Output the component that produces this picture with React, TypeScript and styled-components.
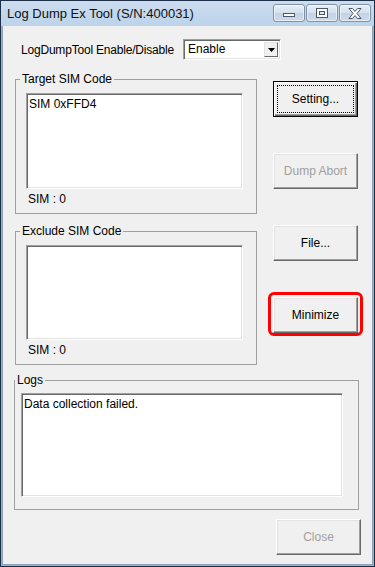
import React from 'react';
import styled, { createGlobalStyle, css } from 'styled-components';

const GlobalStyle = createGlobalStyle`
  html, body {
    margin: 0;
    padding: 0;
    background: #f0f0f0;
  }
  body {
    font-family: "Liberation Sans", Arial, sans-serif;
    font-size: 12px;
    color: #000;
  }
  * {
    box-sizing: border-box;
  }
`;

const Window = styled.div`
  width: 375px;
  height: 567px;
  display: flex;
  flex-direction: column;
  border: 1px solid #1b2f47;
  background: #7cbbe6;
  padding: 0 1px 1px 1px;
`;

const TitleBar = styled.div`
  height: 25px;
  flex: none;
  margin: 0 -1px;
  display: flex;
  align-items: flex-start;
  justify-content: space-between;
  padding: 0 3px 0 6px;
  background: linear-gradient(#cddcee, #bcd3ea);
`;

const Title = styled.span`
  font-size: 13px;
  line-height: 25px;
  color: #111;
`;

const CaptionButtons = styled.div`
  display: flex;
  gap: 1px;
  margin-top: 3px;
`;

const CapBtn = styled.div`
  width: 32px;
  height: 18px;
  border: 1px solid #7f92a9;
  border-radius: 3px;
  background: linear-gradient(#e8eff8, #d3e0ee 50%, #c3d3e6 51%, #ccdaeb);
  box-shadow: inset 0 0 0 1px rgba(255, 255, 255, 0.55);
  display: flex;
  align-items: center;
  justify-content: center;
`;

const Client = styled.div`
  flex: 1;
  background: #f0f0f0;
  border: 1px solid #8ea3ba;
  border-top: none;
  padding: 13px 11px 0 12px;
  display: flex;
  flex-direction: column;
`;

const EnableRow = styled.div`
  display: flex;
  align-items: center;
  height: 21px;
`;

const RowLabel = styled.span`
  flex: none;
  width: 168px;
  padding-left: 6px;
  white-space: nowrap;
  letter-spacing: -0.2px;
`;

const Combo = styled.div`
  width: 98px;
  height: 21px;
  display: flex;
  background: #fff;
  border: 1px solid;
  border-color: #a0a0a0 #fff #fff #a0a0a0;
  box-shadow: inset 1px 1px #696969, inset -1px -1px #e3e3e3;
  padding: 2px;
`;

const ComboText = styled.span`
  flex: 1;
  padding-left: 2px;
  line-height: 15px;
`;

const ComboArrow = styled.span`
  width: 14px;
  background: #f0f0f0;
  border: 1px solid;
  border-color: #e3e3e3 #696969 #696969 #e3e3e3;
  display: flex;
  align-items: center;
  justify-content: center;
`;

const Middle = styled.div`
  display: flex;
  margin-top: 12px;
`;

const Groups = styled.div`
  width: 242px;
  display: flex;
  flex-direction: column;
  gap: 10px;
`;

const Group = styled.fieldset<{ $pad?: string }>`
  margin: 0;
  min-width: 0;
  border: 1px solid #a0a0a0;
  padding: ${p => p.$pad || '7px 13px 7px 10px'};
`;

const Legend = styled.legend`
  padding: 0 2px;
  margin-left: -6px;
  line-height: 14px;
`;

const ListBox = styled.div<{ $h: number }>`
  height: ${p => p.$h}px;
  background: #fff;
  border: 1px solid;
  border-color: #a0a0a0 #fff #fff #a0a0a0;
  box-shadow: inset 1px 1px #696969, inset -1px -1px #e3e3e3;
  padding: 3px 2px;
  line-height: 14px;
`;

const Count = styled.div`
  margin-top: 3px;
  padding-left: 2px;
  line-height: 14px;
`;

const ButtonCol = styled.div`
  margin-left: 16px;
  padding-top: 9px;
  display: flex;
  flex-direction: column;
  gap: 36px;
`;

const Button = styled.button<{ $default?: boolean; $highlight?: boolean }>`
  position: relative;
  width: 85px;
  height: 36px;
  padding: 0;
  font: inherit;
  color: #000;
  background: #f0f0f0;
  border: 1px solid;
  border-color: #fff #696969 #696969 #fff;
  box-shadow: inset -1px -1px #a0a0a0, inset 1px 1px #e3e3e3;

  &:disabled {
    color: #a0a0a0;
  }

  ${p => p.$default && css`
    border-color: #000;
    box-shadow: inset 1px 1px #fff, inset -1px -1px #696969, inset -2px -2px #a0a0a0;

    &::before {
      content: '';
      position: absolute;
      inset: 3px;
      border: 1px dotted #000;
    }
  `}

  ${p => p.$highlight && css`
    &::after {
      content: '';
      position: absolute;
      top: -6px;
      bottom: -4px;
      left: -6px;
      right: -6px;
      border: 3px solid #f00;
      border-radius: 6px;
    }
  `}
`;

const LogsGroup = styled(Group)`
  margin-top: 8px;
  margin-left: -1px;
  width: 345px;
`;

const Footer = styled.div`
  margin-top: 9px;
  display: flex;
  justify-content: flex-end;
`;

const App = () => {
  return (
    <>
      <GlobalStyle />
      <Window>
        <TitleBar>
          <Title>Log Dump Ex Tool (S/N:400031)</Title>
          <CaptionButtons>
            <CapBtn>
              <svg width="12" height="10" viewBox="0 0 12 10">
                <rect x="0.5" y="5.5" width="11" height="3" fill="#fff" stroke="#4b5867" />
              </svg>
            </CapBtn>
            <CapBtn>
              <svg width="12" height="10" viewBox="0 0 12 10">
                <rect x="0.5" y="0.5" width="11" height="9" fill="#fff" stroke="#4b5867" />
                <rect x="3.5" y="3.5" width="5" height="3" fill="#dfe7f1" stroke="#4b5867" />
              </svg>
            </CapBtn>
            <CapBtn>
              <svg width="14" height="11" viewBox="0 0 14 11">
                <polygon
                  points="1,0.5 4.5,0.5 7,3.5 9.5,0.5 13,0.5 9,5.5 13,10.5 9.5,10.5 7,7.5 4.5,10.5 1,10.5 5,5.5"
                  fill="#fff"
                  stroke="#4b5867"
                  strokeLinejoin="round"
                />
              </svg>
            </CapBtn>
          </CaptionButtons>
        </TitleBar>

        <Client>
          <EnableRow>
            <RowLabel>LogDumpTool Enable/Disable</RowLabel>
            <Combo>
              <ComboText>Enable</ComboText>
              <ComboArrow>
                <svg width="7" height="4" viewBox="0 0 7 4">
                  <polygon points="0,0 7,0 3.5,4" fill="#000" />
                </svg>
              </ComboArrow>
            </Combo>
          </EnableRow>

          <Middle>
            <Groups>
              <Group>
                <Legend>Target SIM Code</Legend>
                <ListBox $h={96}>SIM 0xFFD4</ListBox>
                <Count>SIM : 0</Count>
              </Group>
              <Group>
                <Legend>Exclude SIM Code</Legend>
                <ListBox $h={95} />
                <Count>SIM : 0</Count>
              </Group>
            </Groups>

            <ButtonCol>
              <Button $default>Setting...</Button>
              <Button disabled>Dump Abort</Button>
              <Button>File...</Button>
              <Button $highlight>Minimize</Button>
            </ButtonCol>
          </Middle>

          <LogsGroup $pad="6px 15px 12px 6px">
            <Legend>Logs</Legend>
            <ListBox $h={104}>Data collection failed.</ListBox>
          </LogsGroup>

          <Footer>
            <Button disabled>Close</Button>
          </Footer>
        </Client>
      </Window>
    </>
  );
};

export default App;
